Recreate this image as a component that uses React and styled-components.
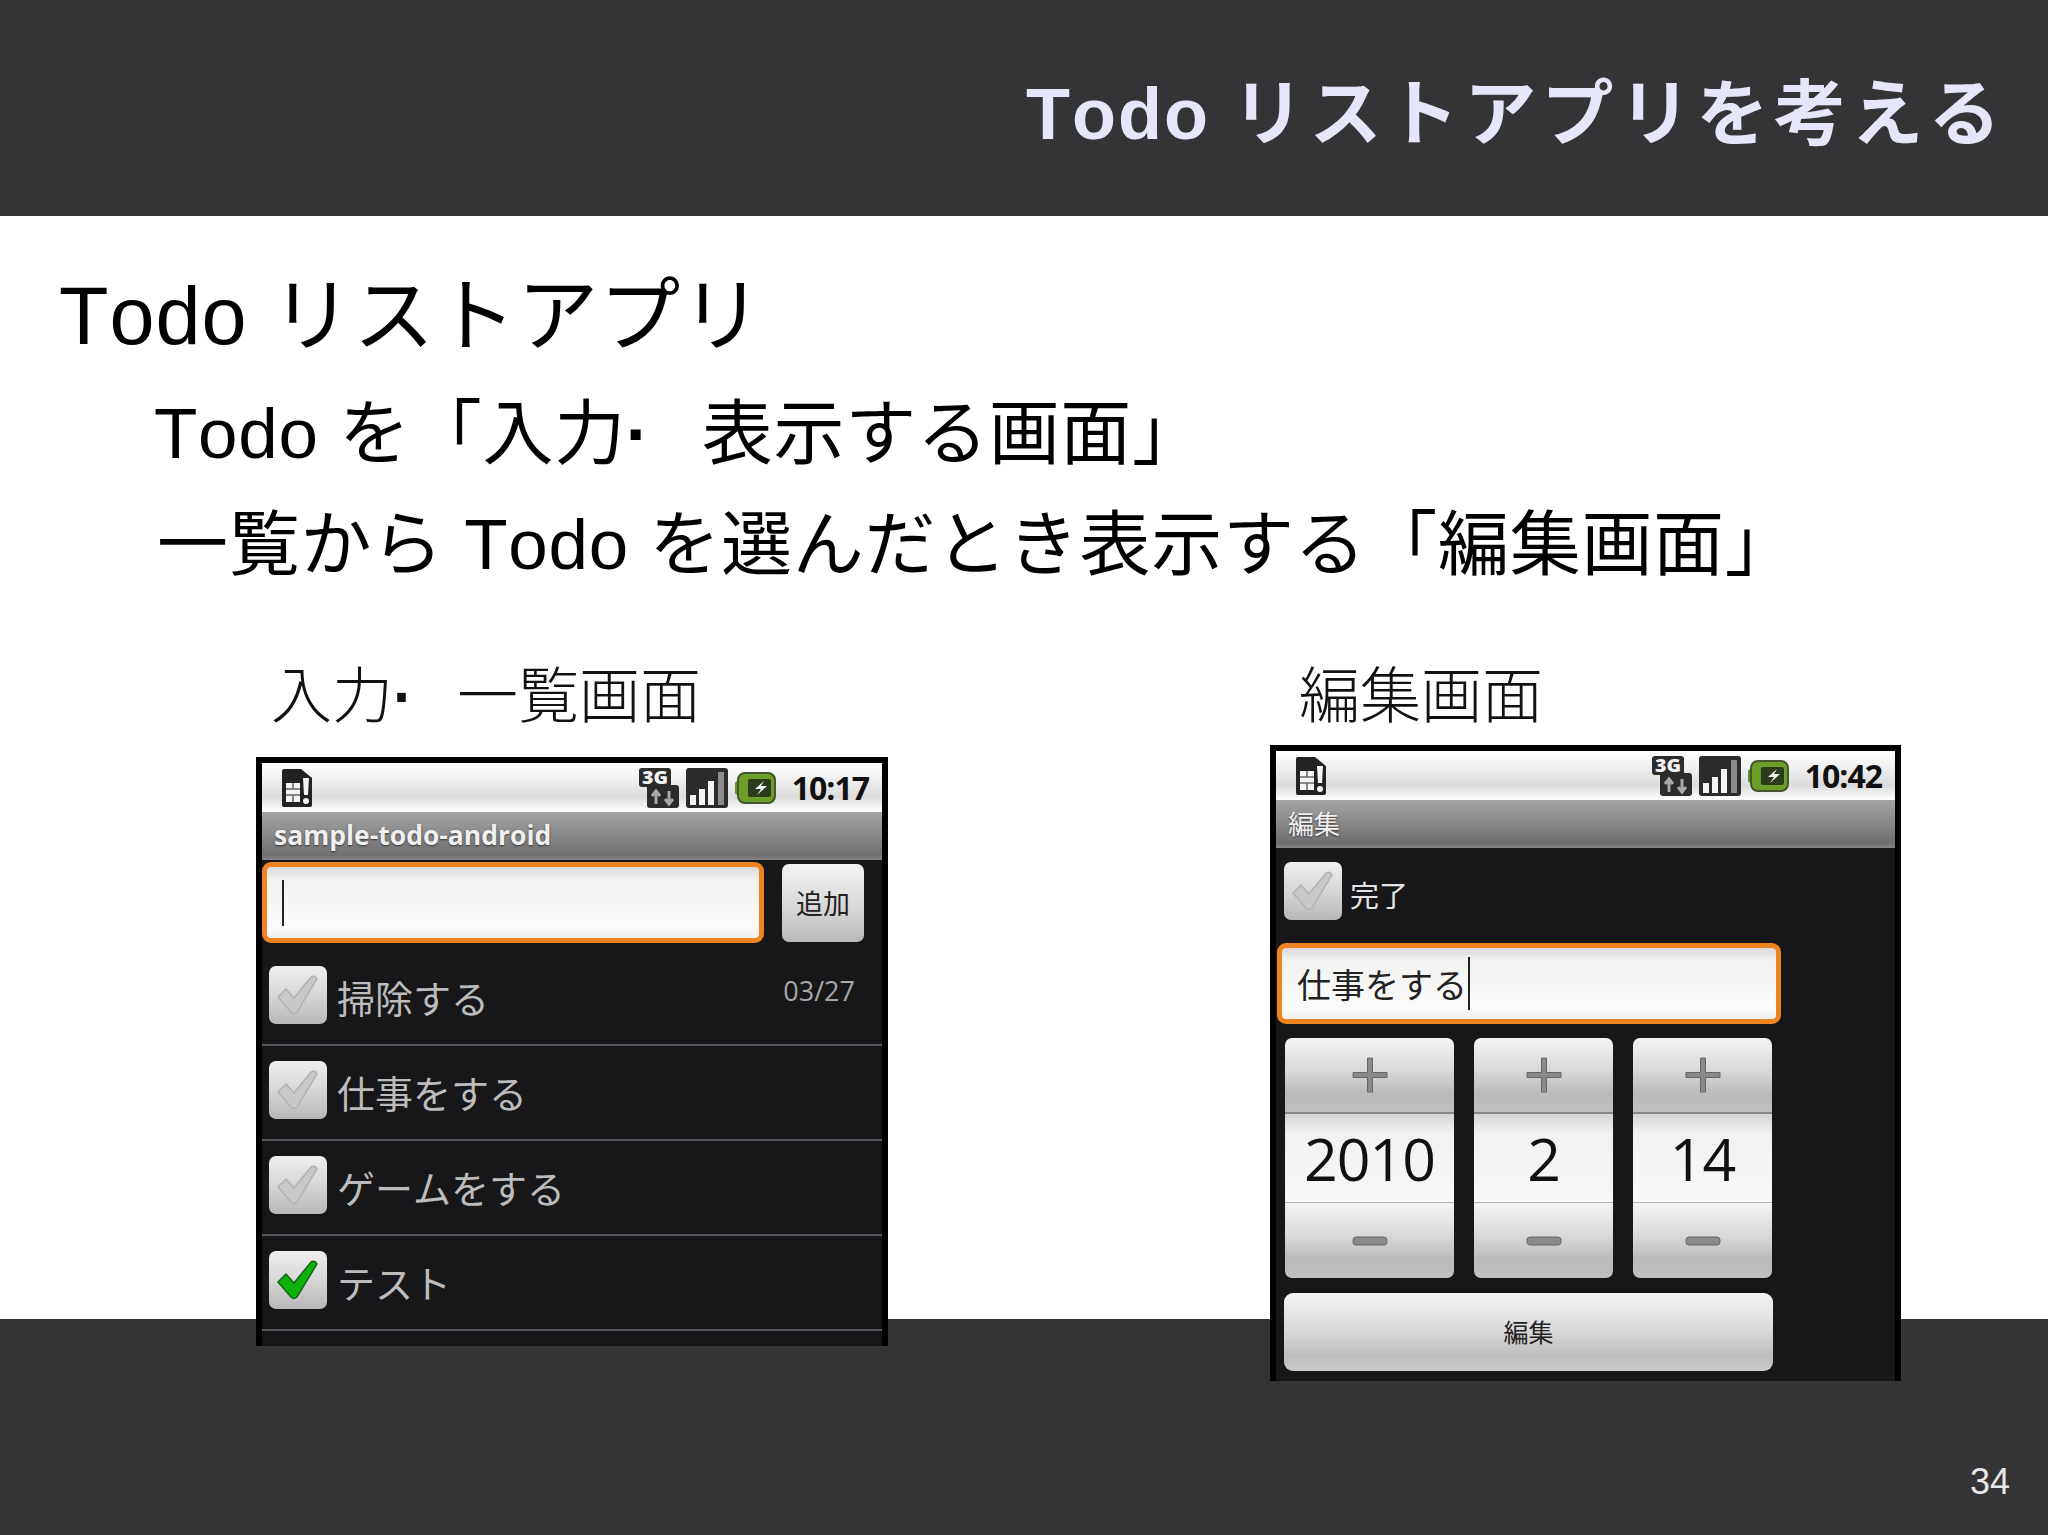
import React from "react";
import styled, { createGlobalStyle } from "styled-components";

const SANS = `"Liberation Sans", "Noto Sans CJK JP", sans-serif`;
const DROID = `"Open Sans", "Noto Sans CJK JP", sans-serif`;

const todos = [
  { label: "掃除する", date: "03/27" },
  { label: "仕事をする" },
  { label: "ゲームをする" },
  { label: "テスト", done: true },
];

const pickers = [
  { value: "2010", wide: true },
  { value: "2" },
  { value: "14" },
];

const SimIcon = () => (
  <svg width="33" height="40" viewBox="0 0 33 40">
    <path d="M3 1h17l11 9v27a2 2 0 0 1-2 2H3a2 2 0 0 1-2-2V3a2 2 0 0 1 2-2z" fill="#222" />
    <path d="M5 15h14v19H5z" fill="#f4f4f4" />
    <path d="M5 21h14M5 27h14M12 15v6M12 27v7" stroke="#666" strokeWidth="1.5" />
    <path d="M22 10h6l-1 17h-4z" fill="#f4f4f4" />
    <circle cx="25" cy="33" r="3" fill="#f4f4f4" />
  </svg>
);

const NetworkIcon = () => (
  <svg width="40" height="40" viewBox="0 0 40 40" overflow="visible">
    <path d="M3 0h26a3 3 0 0 1 3 3v14h5a3 3 0 0 1 3 3v17a3 3 0 0 1-3 3H11a3 3 0 0 1-3-3V19H3a3 3 0 0 1-3-3V3a3 3 0 0 1 3-3z" fill="#2b2b2b" />
    <text x="3" y="15.500" fontFamily="Open Sans" fontWeight="800" fontSize="17" textLength="26" lengthAdjust="spacingAndGlyphs" fill="#f2f2f2">3G</text>
    <path d="M17 36V24M13 28l4-5 4 5M30 23v12M26 31l4 5 4-5" stroke="#a8a8a8" strokeWidth="3" fill="none" />
  </svg>
);

const SignalIcon = () => (
  <svg width="42" height="40" viewBox="0 0 42 40">
    <rect width="42" height="40" rx="3" fill="#2b2b2b" />
    <rect x="4" y="27" width="6" height="10" fill="#f4f4f4" />
    <rect x="13" y="21" width="6" height="16" fill="#f4f4f4" />
    <rect x="22" y="13" width="6" height="24" fill="#f4f4f4" />
    <rect x="32" y="4" width="6" height="33" fill="#8b8b8b" />
  </svg>
);

const BatteryIcon = () => (
  <svg width="41" height="32" viewBox="0 0 41 32">
    <rect x="0" y="9" width="8" height="14" rx="3" fill="#5f9423" />
    <rect x="3" y="1" width="37" height="30" rx="7" fill="#6b9f2a" stroke="#46552f" strokeWidth="2" />
    <rect x="13" y="7" width="23" height="18" rx="2" fill="#2c3a1e" />
    <path d="M29 9l-9 8h6l-4 6 10-9h-6z" fill="#f2f2f2" />
  </svg>
);

const CheckMark = ({ done }) => (
  <svg width="44" height="42" viewBox="0 0 44 42">
    <path
      d="M2 23L10 15L18 24L35 3Q39 1 41 5L21 38Q18 41 15 38Z"
      fill={done ? "#0cb10c" : "#c8c8c8"}
      stroke={done ? "#17641a" : "#b2b2b2"}
      strokeWidth="1.5"
    />
  </svg>
);

const PlusIcon = () => (
  <svg width="36" height="36" viewBox="0 0 36 36">
    <path
      d="M15.5 1h5v14.5H35v5H20.500v14.500h-5V20.500H1v-5h14.500z"
      fill="#8a8a8a"
      stroke="#666"
      strokeWidth="1"
    />
  </svg>
);

const MinusIcon = () => (
  <svg width="36" height="10" viewBox="0 0 36 10">
    <rect x="1" y="1" width="34" height="8" rx="3" fill="#8a8a8a" stroke="#666" />
  </svg>
);

const StatusRow = ({ time }) => (
  <StatusBar>
    <SimIcon />
    <StatusIcons>
      <NetworkIcon />
      <SignalIcon />
      <BatteryIcon />
      <Clock>{time}</Clock>
    </StatusIcons>
  </StatusBar>
);

const App = () => {
  return (
    <>
      <GlobalStyle />
      <Slide>
        <Header>
          <HeaderTitle>
            Todo <HeaderKana>リストアプリを考える</HeaderKana>
          </HeaderTitle>
        </Header>
        <Content>
          <Heading>Todo リストアプリ</Heading>
          <SubLine>
            Todo を「入力<Dot>·</Dot>表示する画面」
          </SubLine>
          <SubLine $shift={3}>一覧から Todo を選んだとき表示する「編集画面」</SubLine>
          <Shots>
            <ShotColumn $width={1014} $labelLeft={15}>
              <ShotLabel>
                入力<LabelDot>·</LabelDot>一覧画面
              </ShotLabel>
              <Phone $width={632} $height={589} $gap={15}>
                <StatusRow time="10:17" />
                <TitleBar $bold>sample-todo-android</TitleBar>
                <AddRow>
                  <TextField $width={502}>
                    <Caret />
                  </TextField>
                  <AddButton>追加</AddButton>
                </AddRow>
                {todos.map((todo) => (
                  <TodoRow key={todo.label}>
                    <CheckBox>
                      <CheckMark done={todo.done} />
                    </CheckBox>
                    <TodoLabel>{todo.label}</TodoLabel>
                    {todo.date && <TodoDate>{todo.date}</TodoDate>}
                  </TodoRow>
                ))}
              </Phone>
            </ShotColumn>
            <ShotColumn $width={631} $labelLeft={29}>
              <ShotLabel>編集画面</ShotLabel>
              <Phone $width={631} $height={636} $gap={3}>
                <StatusRow time="10:42" />
                <TitleBar>編集</TitleBar>
                <EditForm>
                  <DoneRow>
                    <CheckBox>
                      <CheckMark />
                    </CheckBox>
                    <DoneLabel>完了</DoneLabel>
                  </DoneRow>
                  <TextField $width={504}>
                    <FieldText>仕事をする</FieldText>
                    <Caret $tight />
                  </TextField>
                  <Pickers>
                    {pickers.map((picker) => (
                      <Picker key={picker.value} $wide={picker.wide}>
                        <PickerStep $height={74}>
                          <PlusIcon />
                        </PickerStep>
                        <PickerValue>{picker.value}</PickerValue>
                        <PickerStep $height={75}>
                          <MinusIcon />
                        </PickerStep>
                      </Picker>
                    ))}
                  </Pickers>
                  <EditButton>編集</EditButton>
                </EditForm>
              </Phone>
            </ShotColumn>
          </Shots>
        </Content>
        <Footer>
          <PageNumber>34</PageNumber>
        </Footer>
      </Slide>
    </>
  );
};

export default App;

const GlobalStyle = createGlobalStyle`
  html, body {
    margin: 0;
    padding: 0;
    background: #fff;
  }
`;

const Slide = styled.div`
  width: 2048px;
  height: 1535px;
  display: flex;
  flex-direction: column;
  overflow: hidden;
  font-family: ${SANS};
  font-kerning: none;
  background: #fff;
`;

const Header = styled.header`
  height: 216px;
  flex: none;
  display: flex;
  align-items: center;
  justify-content: flex-end;
  padding: 0 42px 2px 0;
  box-sizing: border-box;
  background: #343336;
`;

const HeaderTitle = styled.h1`
  margin: 0;
  font-size: 72px;
  font-weight: 700;
  letter-spacing: 2px;
  color: #e6e6fa;
`;

const HeaderKana = styled.span`
  letter-spacing: 5.4px;
`;

const Content = styled.main`
  flex: none;
  height: 1103px;
  box-sizing: border-box;
  padding: 50px 0 0 59px;
  position: relative;
  z-index: 1;
  color: #000;
`;

const Heading = styled.h2`
  margin: 0 0 12px;
  font-size: 81px;
  font-weight: 400;
  line-height: 100px;
  letter-spacing: 1px;
`;

const SubLine = styled.p`
  margin: 0 0 0 ${(p) => 95 + (p.$shift || 0)}px;
  font-size: 71px;
  line-height: 111px;
  letter-spacing: 0.7px;
  white-space: nowrap;
`;

const Dot = styled.span`
  display: inline-block;
  width: 76px;
  font-weight: 700;
`;

const Shots = styled.div`
  display: flex;
  margin: 52px 0 0 197px;
`;

const ShotColumn = styled.section`
  width: ${(p) => p.$width}px;
  flex: none;

  h3 {
    margin-left: ${(p) => p.$labelLeft}px;
  }
`;

const ShotLabel = styled.h3`
  margin: 0;
  font-size: 61px;
  font-weight: 300;
  line-height: 90px;
  color: #111;
  white-space: nowrap;
`;

const LabelDot = styled.span`
  display: inline-block;
  width: 64px;
  font-weight: 700;
`;

const Phone = styled.div`
  width: ${(p) => p.$width}px;
  height: ${(p) => p.$height}px;
  margin-top: ${(p) => p.$gap}px;
  box-sizing: border-box;
  border: solid #000;
  border-width: 6px 6px 0;
  background: #171719;
  overflow: hidden;
`;

const StatusBar = styled.div`
  height: 49px;
  display: flex;
  align-items: center;
  justify-content: space-between;
  padding: 0 13px 0 19px;
  box-sizing: border-box;
  background: linear-gradient(#fff 0%, #f2f2f2 30%, #dcdcdc 70%, #fff 100%);
`;

const StatusIcons = styled.div`
  display: flex;
  align-items: center;
  gap: 7px;
`;

const Clock = styled.span`
  margin-left: 9px;
  font-family: ${DROID};
  font-size: 32px;
  font-weight: 700;
  letter-spacing: -1px;
  color: #111;
`;

const TitleBar = styled.div`
  height: 48px;
  display: flex;
  align-items: center;
  padding: 0 0 3px 12px;
  box-sizing: border-box;
  font-family: ${DROID};
  font-size: ${(p) => (p.$bold ? 26.5 : 26)}px;
  font-weight: ${(p) => (p.$bold ? 700 : 400)};
  color: #f0f0f0;
  text-shadow: 0 1px 2px #333;
  background: linear-gradient(#a4a4a6, #8a8a8a 45%, #6f6f71 90%, #858585);
`;

const AddRow = styled.div`
  display: flex;
  align-items: center;
  gap: 18px;
  padding: 2px 0 8px 0;
`;

const TextField = styled.div`
  width: ${(p) => p.$width}px;
  height: 81px;
  display: flex;
  align-items: center;
  box-sizing: border-box;
  padding-left: 15px;
  border: 5px solid #ee8420;
  border-radius: 9px;
  background: linear-gradient(#d9d9d9, #f2f2f0 18%, #fbfbfb 85%, #eeeeee);
`;

const Caret = styled.span`
  width: 2px;
  height: ${(p) => (p.$tight ? 53 : 46)}px;
  margin-left: ${(p) => (p.$tight ? 1 : 0)}px;
  background: #222;
`;

const FieldText = styled.span`
  font-family: ${DROID};
  font-size: 34px;
  color: #222;
`;

const AddButton = styled.button`
  width: 82px;
  height: 78px;
  padding: 0;
  border: 0;
  border-radius: 7px;
  font-family: ${DROID};
  font-size: 27px;
  color: #222;
  background: linear-gradient(#f3f3f3, #d8d8d8 55%, #b9b9b9);
`;

const TodoRow = styled.div`
  height: 95px;
  display: flex;
  align-items: flex-start;
  box-sizing: border-box;
  padding: 15px 27px 0 7px;
  border-bottom: 2px solid #55555a;
`;

const CheckBox = styled.div`
  width: 58px;
  height: 58px;
  flex: none;
  display: flex;
  align-items: center;
  justify-content: center;
  border-radius: 7px;
  background: linear-gradient(#efefef, #d6d6d6 50%, #b8b8b8);
`;

const TodoLabel = styled.span`
  margin-left: 10px;
  font-family: ${DROID};
  font-size: 38px;
  line-height: 64px;
  color: #bcbcbc;
`;

const TodoDate = styled.span`
  margin-left: auto;
  font-family: ${DROID};
  font-size: 27px;
  line-height: 50px;
  color: #a6a6a6;
`;

const EditForm = styled.div`
  display: flex;
  flex-direction: column;
  align-items: flex-start;
  padding: 14px 0 0 1px;
`;

const DoneRow = styled.div`
  display: flex;
  align-items: center;
  gap: 8px;
  margin: 0 0 23px 7px;
`;

const DoneLabel = styled.span`
  font-family: ${DROID};
  font-size: 29px;
  color: #e4e4e4;
  padding-top: 6px;
`;

const Pickers = styled.div`
  display: flex;
  gap: 20px;
  margin: 14px 0 15px 8px;
`;

const Picker = styled.div`
  width: ${(p) => (p.$wide ? 169 : 139)}px;
  display: flex;
  flex-direction: column;
  border-radius: 7px;
  overflow: hidden;
`;

const PickerStep = styled.div`
  height: ${(p) => p.$height}px;
  display: flex;
  align-items: center;
  justify-content: center;
  background: linear-gradient(#f4f4f4, #d8d8d8 45%, #bababa 75%, #c0c0c0);
`;

const PickerValue = styled.div`
  height: 91px;
  display: flex;
  align-items: center;
  justify-content: center;
  box-sizing: border-box;
  border-top: 2px solid #88888a;
  border-bottom: 1px solid #b4b4b4;
  font-family: ${DROID};
  font-size: 59px;
  font-weight: 400;
  letter-spacing: -1px;
  color: #111;
  background: linear-gradient(#d4d4d4, #f2f2f4 22%, #f8f8fa);
`;

const EditButton = styled.button`
  width: 489px;
  height: 78px;
  margin-left: 7px;
  padding: 0 0 2px;
  border: 0;
  border-radius: 9px;
  font-family: ${DROID};
  font-size: 25px;
  color: #222;
  background: linear-gradient(#f4f4f4, #d8d8d8 50%, #bebcbe 80%, #cacaca);
`;

const Footer = styled.footer`
  flex: none;
  height: 216px;
  display: flex;
  align-items: flex-end;
  justify-content: flex-end;
  box-sizing: border-box;
  padding: 0 38px 32px 0;
  background: #343336;
`;

const PageNumber = styled.span`
  font-size: 36px;
  color: #e6e6e6;
`;
